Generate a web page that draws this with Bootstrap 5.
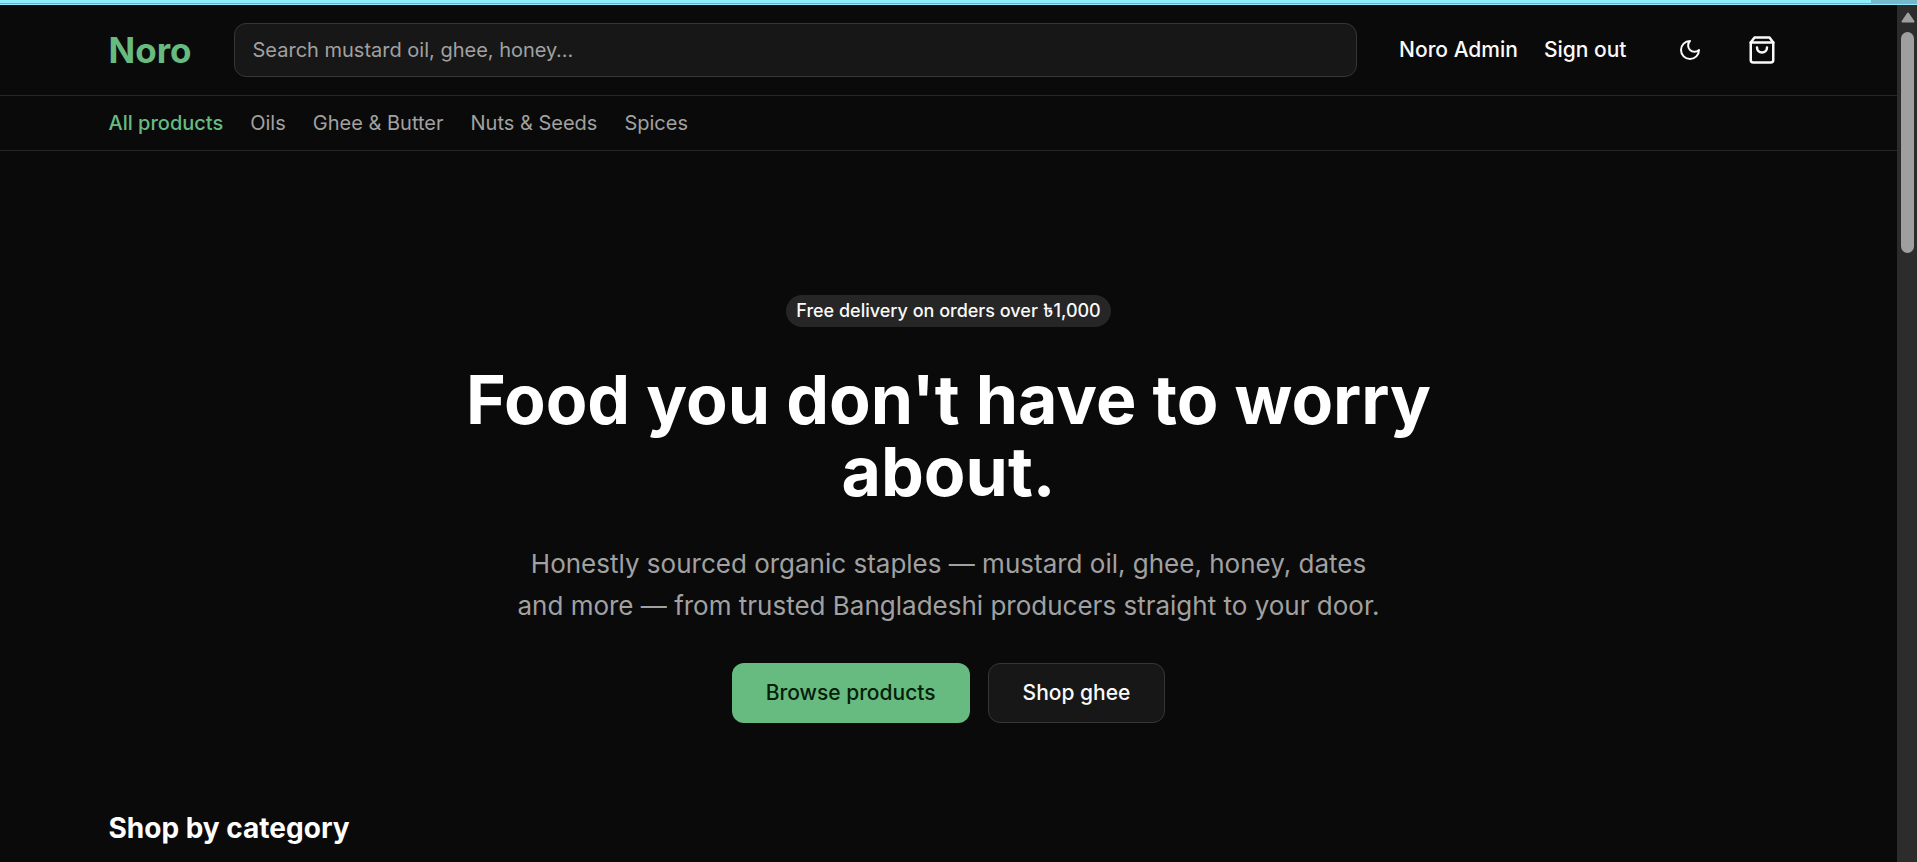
<!DOCTYPE html>
<html lang="en" data-bs-theme="dark">
<head>
<meta charset="utf-8">
<meta name="viewport" content="width=device-width, initial-scale=1">
<title>Noro</title>
<link href="https://cdn.jsdelivr.net/npm/bootstrap@5.3.0/dist/css/bootstrap.min.css" rel="stylesheet">
<style>
  :root {
    --noro-bg: #0a0a0a;
    --noro-card: #171717;
    --noro-line: #262626;
    --noro-input-line: #363636;
    --noro-green: #67bb80;
    --noro-text: #fafafa;
    --noro-muted: #a1a1a1;
  }
  body {
    background: var(--noro-bg);
    color: var(--noro-text);
    font-family: Inter, "Noto Sans", "Noto Sans Bengali", sans-serif;
    font-size: 20px;
    line-height: 30px;
  }
  a { text-decoration: none; color: inherit; }
  .top-strip { height: 5px; background: #8fecf9; border-bottom: 1px solid #8fecf9; box-shadow: inset 0 -1px 0 #6fb0c4; }
  .top-strip-end { width: 46px; background: #76b9cd; }
  .viewport-row { height: calc(100vh - 5px); }
  .shell { width: 100%; max-width: 1680px; margin: 0 auto; }
  .site-header, .category-nav { border-bottom: 1px solid var(--noro-line); }
  .header-row { height: 90px; gap: 42px; }
  .brand { font-size: 35px; font-weight: 700; color: var(--noro-green); }
  .search-box {
    height: 54px; padding: 0 18px; border-radius: 12px; font-size: 20px;
    background: var(--noro-card); border: 1px solid var(--noro-input-line); color: var(--noro-text);
  }
  .search-box::placeholder { color: var(--noro-muted); opacity: 1; }
  .search-box:focus { background: var(--noro-card); border-color: var(--noro-green); box-shadow: none; }
  .account { gap: 26px; font-size: 21px; font-weight: 500; }
  .plain-btn { background: none; border: 0; padding: 0; color: inherit; font-weight: 500; }
  .icon-btn { width: 54px; height: 54px; }
  .icons { gap: 18px; margin-left: 10px; }
  .category-list { height: 54px; gap: 27px; color: var(--noro-muted); }
  .category-list .current { color: var(--noro-green); font-weight: 500; }
  .hero { padding: 144px 24px 84px; gap: 36px; }
  .promo { height: 32px; padding: 0 10px; border-radius: 16px; background: var(--noro-line); font-size: 18px; line-height: 32px; font-weight: 500; }
  .hero h1 { max-width: 1152px; font-size: 68px; line-height: 72px; font-weight: 700; }
  .hero-text { max-width: 870px; font-size: 26px; line-height: 42px; color: var(--noro-muted); }
  .hero-actions { gap: 18px; }
  .cta { height: 60px; padding: 0 34px; border-radius: 12px; font-size: 21px; font-weight: 500; line-height: 30px; }
  .cta-main, .cta-main:hover { background: var(--noro-green); color: #052009; border: 0; }
  .cta-alt, .cta-alt:hover { background: var(--noro-card); color: var(--noro-text); border: 1px solid var(--noro-input-line); }
  .section-title { font-size: 28px; line-height: 42px; font-weight: 700; }
  .scroll-rail { width: 20px; background: #2c2c2c; padding: 7px 0 0 1px; }
  .scroll-thumb { width: 13px; height: 221px; border-radius: 7px; background: #9f9f9f; margin-top: 9px; }
</style>
</head>
<body class="overflow-hidden">
<div class="top-strip d-flex justify-content-end"><div class="top-strip-end"></div></div>
<div class="viewport-row d-flex">
  <div class="flex-grow-1 overflow-hidden">
    <header class="site-header">
      <div class="shell header-row d-flex align-items-center">
        <a href="#" class="brand">Noro</a>
        <input type="search" class="search-box form-control flex-grow-1 w-auto" placeholder="Search mustard oil, ghee, honey…" aria-label="Search products">
        <div class="account d-flex align-items-center text-nowrap">
          <a href="#">Noro Admin</a>
          <button type="button" class="plain-btn">Sign out</button>
          <div class="icons d-flex">
            <button type="button" class="plain-btn icon-btn d-flex align-items-center justify-content-center" aria-label="Toggle theme">
              <svg width="24" height="24" viewBox="0 0 24 24" fill="none" stroke="currentColor" stroke-width="2" stroke-linecap="round" stroke-linejoin="round"><path d="M12 3a6 6 0 0 0 9 9 9 9 0 1 1-9-9Z"/></svg>
            </button>
            <a href="#" class="icon-btn d-flex align-items-center justify-content-center" aria-label="Cart">
              <svg width="30" height="30" viewBox="0 0 24 24" fill="none" stroke="currentColor" stroke-width="2" stroke-linecap="round" stroke-linejoin="round"><path d="M6 2 3 6v14a2 2 0 0 0 2 2h14a2 2 0 0 0 2-2V6l-3-4Z"/><path d="M3 6h18"/><path d="M16 10a4 4 0 0 1-8 0"/></svg>
            </a>
          </div>
        </div>
      </div>
    </header>
    <nav class="category-nav" aria-label="Categories">
      <div class="shell category-list d-flex align-items-center">
        <a href="#" class="current">All products</a>
        <a href="#">Oils</a>
        <a href="#">Ghee &amp; Butter</a>
        <a href="#">Nuts &amp; Seeds</a>
        <a href="#">Spices</a>
      </div>
    </nav>
    <main>
      <section class="hero d-flex flex-column align-items-center text-center">
        <span class="promo">Free delivery on orders over ৳1,000</span>
        <h1 class="mb-0">Food you don't have to worry about.</h1>
        <p class="hero-text mb-0">Honestly sourced organic staples — mustard oil, ghee, honey, dates and more — from trusted Bangladeshi producers straight to your door.</p>
        <div class="hero-actions d-flex">
          <button type="button" class="btn cta cta-main">Browse products</button>
          <button type="button" class="btn cta cta-alt">Shop ghee</button>
        </div>
      </section>
      <section class="shell">
        <h2 class="section-title mb-0">Shop by category</h2>
      </section>
    </main>
  </div>
  <div class="scroll-rail d-flex flex-column align-items-center flex-shrink-0" aria-hidden="true">
    <svg width="14" height="11" viewBox="0 0 14 11"><path d="M7 1.5 12.5 9.5h-11Z" fill="#9f9f9f" stroke="#9f9f9f" stroke-width="2" stroke-linejoin="round"/></svg>
    <div class="scroll-thumb"></div>
  </div>
</div>
<script src="https://cdn.jsdelivr.net/npm/bootstrap@5.3.0/dist/js/bootstrap.bundle.min.js"></script>
</body>
</html>
